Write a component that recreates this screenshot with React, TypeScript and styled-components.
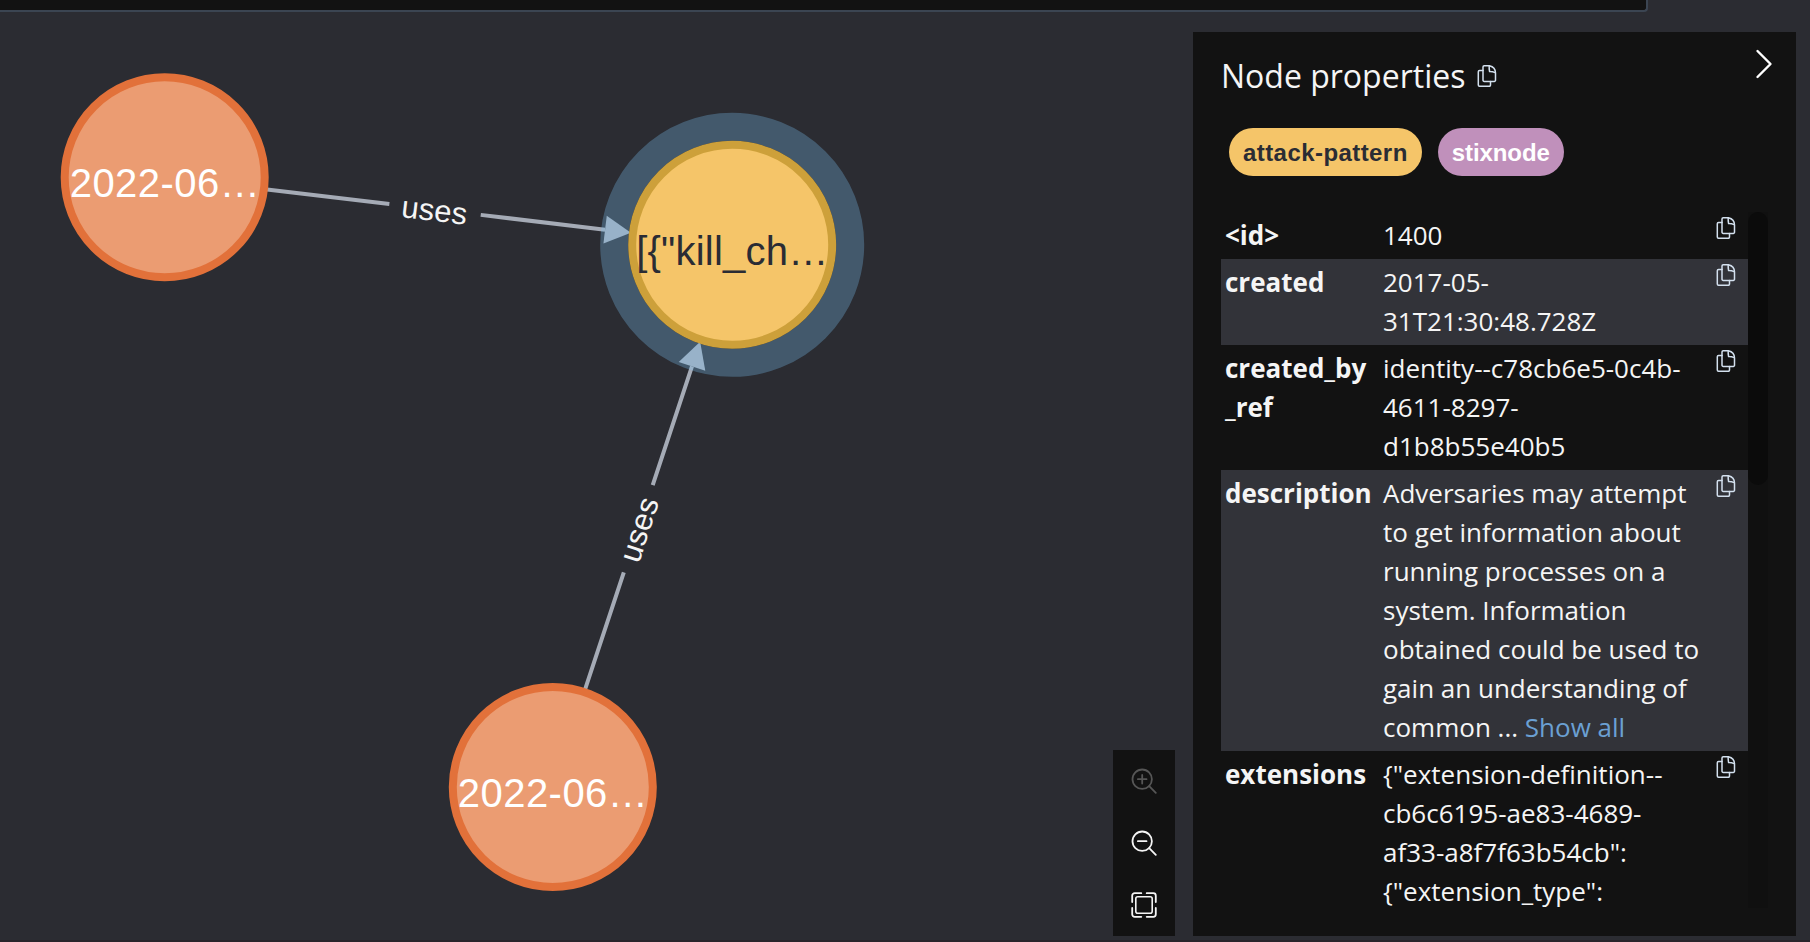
import React from "react";
import styled, { createGlobalStyle, css } from "styled-components";

const GlobalStyle = createGlobalStyle`
  *, *::before, *::after { box-sizing: border-box; }
  html, body { margin: 0; height: 100%; background: #2a2b31; }
  #root { height: 100%; }
`;

const uiFont = `"Open Sans", "Noto Sans", sans-serif`;
const graphFont = `"Liberation Sans", Arial, sans-serif`;

const Frame = styled.main`
  display: flex;
  flex-direction: column;
  height: 942px;
  width: 1810px;
  overflow: hidden;
  background: #2b2c32;
  border-bottom: 2px solid #29242b;
  color: #f5f5f5;
  font-family: ${uiFont};
`;

const EditorEdge = styled.div`
  flex: none;
  width: 1648px;
  height: 12px;
  background: #121212;
  border: solid #3b4552;
  border-width: 0 2px 2px 0;
  border-bottom-right-radius: 4px;
`;

const Workspace = styled.div`
  flex: 1;
  min-height: 0;
  display: flex;
  align-items: stretch;
`;

const GraphArea = styled.section`
  width: 1113px;
  flex: none;
`;

const GraphCanvas = styled.svg`
  display: block;
  font-family: ${graphFont};
`;

const ZoomBar = styled.nav`
  align-self: flex-end;
  display: flex;
  flex-direction: column;
  width: 62px;
  height: 186px;
  margin-bottom: 4px;
  background: #121212;
`;

const ZoomButton = styled.button<{ $dim?: boolean }>`
  flex: 1;
  display: flex;
  align-items: center;
  justify-content: center;
  padding: 0;
  border: 0;
  background: none;
  color: ${(p) => (p.$dim ? "#565656" : "#f5f5f5")};
`;

const Panel = styled.aside`
  display: flex;
  flex-direction: column;
  width: 603px;
  margin: 20px 0 4px 18px;
  padding: 0 28px 28px;
  background: #121212;
`;

const PanelHeader = styled.header`
  display: flex;
  align-items: center;
  height: 90px;
`;

const Title = styled.h1`
  margin: -2px 0 0;
  font-size: 32px;
  font-weight: 400;
  line-height: 40px;
`;

const CopyButton = styled.button`
  display: flex;
  padding: 0;
  border: 0;
  background: none;
  color: #d3e0ee;
`;

const HeaderCopy = styled(CopyButton)`
  margin: -2px 0 0 12px;
`;

const Collapse = styled.button`
  align-self: flex-start;
  margin: 17px -5px 0 auto;
  padding: 0;
  border: 0;
  background: none;
  color: #fff;
  display: flex;
`;

const Tags = styled.div`
  display: flex;
  gap: 16px;
  padding: 6px 8px 0;
`;

const Tag = styled.span<{ $bg: string; $fg: string; $tracking?: string }>`
  height: 48px;
  padding: 0 14px;
  border-radius: 24px;
  background: ${(p) => p.$bg};
  color: ${(p) => p.$fg};
  font: 700 24px/49px ${graphFont};
  letter-spacing: ${(p) => p.$tracking ?? "normal"};
`;

const Scroller = styled.div`
  flex: 1;
  min-height: 0;
  display: flex;
  margin-top: 36px;
  overflow: hidden;
`;

const Table = styled.dl`
  width: 527px;
  margin: 0;
`;

const rowText = css`
  margin: 0;
  font-size: 26px;
  line-height: 39px;
`;

const Row = styled.div<{ $shade?: boolean }>`
  display: grid;
  grid-template-columns: 158px 321px 1fr;
  padding: 4px 0 4px 4px;
  background: ${(p) => (p.$shade ? "#323339" : "transparent")};
`;

const Key = styled.dt`
  ${rowText}
  font-weight: 700;
  white-space: nowrap;
`;

const Value = styled.dd`
  ${rowText}
  white-space: nowrap;
`;

const RowCopy = styled(CopyButton)`
  align-self: start;
  margin: 0 0 0 12px;
`;

const ShowAll = styled.a`
  color: #6ba0d3;
`;

const Track = styled.div`
  width: 20px;
  background: #101010;
`;

const Thumb = styled.div`
  height: 273px;
  border-radius: 10px;
  background: #0b0b0b;
`;

const CopyIcon = () => (
  <svg width="20" height="24" viewBox="0 0 20 24" fill="none" stroke="currentColor" strokeWidth="1.5" strokeLinejoin="round" strokeLinecap="round">
    <path d="M6 6.500H2.500A1.200 1.200 0 0 0 1.300 7.700V21A1.200 1.200 0 0 0 2.500 22.200H12.300A1.200 1.200 0 0 0 13.500 21V17.500" />
    <path d="M7.200 1.800H12.400Q18.500 3.300 18.500 9V16.200A1.200 1.200 0 0 1 17.300 17.400H7.200A1.200 1.200 0 0 1 6 16.200V3A1.200 1.200 0 0 1 7.200 1.800Z" />
    <path d="M12.200 2Q12 4.200 12.600 7.500Q15.500 7.400 18.200 8.600" />
  </svg>
);

const Magnifier = ({ plus }: { plus?: boolean }) => (
  <svg width="26" height="26" viewBox="0 0 26 26" fill="none" stroke="currentColor" strokeWidth="1.8" strokeLinecap="round">
    <circle cx="11.200" cy="11.200" r="9.700" />
    <path d="M18.200 18.200L24.800 24.800M6.900 11.200H15.500" />
    {plus && <path d="M11.200 6.900V15.500" />}
  </svg>
);

const FitIcon = () => (
  <svg width="26" height="26" viewBox="0 0 26 26" fill="none" stroke="currentColor" strokeWidth="1.800" strokeLinecap="round">
    <path d="M1.200 10V3.700A2.500 2.500 0 0 1 3.700 1.200H10.300M15.700 1.200H22.300A2.500 2.500 0 0 1 24.800 3.700V10M24.800 16V22.300A2.500 2.500 0 0 1 22.300 24.800H15.700M10.300 24.800H3.700A2.500 2.500 0 0 1 1.200 22.300V16" />
    <rect x="4.800" y="4.800" width="16.400" height="16.400" rx="2" strokeWidth="1.600" />
  </svg>
);

type NodeSpec = {
  x: number;
  y: number;
  fill: string;
  ring: string;
  ink: string;
  label: string;
  length: number;
};

const nodes: NodeSpec[] = [
  { x: 164.700, y: 177.300, fill: "#eb9c72", ring: "#e2713a", ink: "#fff", label: "2022-06…", length: 190 },
  { x: 732.200, y: 244.800, fill: "#f5c569", ring: "#cda03a", ink: "#2a2c34", label: '[{"kill_ch…', length: 192 },
  { x: 552.800, y: 787, fill: "#eb9c72", ring: "#e2713a", ink: "#fff", label: "2022-06…", length: 190 },
];

type EdgeSpec = { from: NodeSpec; to: NodeSpec };

const edges: EdgeSpec[] = [
  { from: nodes[0], to: nodes[1] },
  { from: nodes[2], to: nodes[1] },
];

const RADIUS = 104;
const HEAD = 26;
const GAP = 92;

const GraphEdge = ({ from, to }: EdgeSpec) => {
  const dx = to.x - from.x;
  const dy = to.y - from.y;
  const len = Math.hypot(dx, dy);
  const angle = (Math.atan2(dy, dx) * 180) / Math.PI;
  const tip = len - RADIUS + 2;
  const stop = tip - HEAD;
  const mid = (RADIUS + stop) / 2 - 1.5;
  return (
    <g transform={`translate(${from.x} ${from.y}) rotate(${angle})`}>
      <path d={`M${RADIUS - 1} 0H${mid - GAP / 2}M${mid + GAP / 2} 0H${stop}`} stroke="#a5abb6" strokeWidth="4" />
      <path d={`M${tip} 0L${stop} -14V14Z`} fill="#a5abb6" />
      <text x={mid - 0.5} y="11.500" textAnchor="middle" fontSize="31" textLength="66" fill="#f5f5f5">
        uses
      </text>
    </g>
  );
};

const Graph = () => (
  <GraphCanvas width="1113" height="927" viewBox="0 12 1113 927">
    {edges.map((e, i) => (
      <GraphEdge key={i} {...e} />
    ))}
    <circle cx={nodes[1].x} cy={nodes[1].y} r="118" fill="none" stroke="#7cc3f4" strokeOpacity="0.300" strokeWidth="28" />
    {nodes.map((n, i) => (
      <g key={i}>
        <circle cx={n.x} cy={n.y} r="100" fill={n.fill} stroke={n.ring} strokeWidth="8" />
        <text x={n.x} y={n.y + 20} textAnchor="middle" fontSize="40" textLength={n.length} fill={n.ink}>
          {n.label}
        </text>
      </g>
    ))}
  </GraphCanvas>
);

type Property = { name: string[]; value: string[]; more?: boolean };

const properties: Property[] = [
  { name: ["<id>"], value: ["1400"] },
  { name: ["created"], value: ["2017-05-", "31T21:30:48.728Z"] },
  { name: ["created_by", "_ref"], value: ["identity--c78cb6e5-0c4b-", "4611-8297-", "d1b8b55e40b5"] },
  {
    name: ["description"],
    value: [
      "Adversaries may attempt",
      "to get information about",
      "running processes on a",
      "system. Information",
      "obtained could be used to",
      "gain an understanding of",
      "common ... ",
    ],
    more: true,
  },
  {
    name: ["extensions"],
    value: ['{"extension-definition--', "cb6c6195-ae83-4689-", 'af33-a8f7f63b54cb":', '{"extension_type":'],
  },
];

const Lines = ({ lines }: { lines: string[] }) => (
  <>
    {lines.map((line, i) => (
      <React.Fragment key={i}>
        {i > 0 && <br />}
        {line}
      </React.Fragment>
    ))}
  </>
);

export default function App() {
  return (
    <>
      <GlobalStyle />
      <Frame>
        <EditorEdge />
        <Workspace>
          <GraphArea>
            <Graph />
          </GraphArea>
          <ZoomBar>
            <ZoomButton $dim aria-label="Zoom in"><Magnifier plus /></ZoomButton>
            <ZoomButton aria-label="Zoom out"><Magnifier /></ZoomButton>
            <ZoomButton aria-label="Zoom to fit"><FitIcon /></ZoomButton>
          </ZoomBar>
          <Panel>
            <PanelHeader>
              <Title>Node properties</Title>
              <HeaderCopy aria-label="Copy all"><CopyIcon /></HeaderCopy>
              <Collapse aria-label="Collapse">
                <svg width="18" height="30" viewBox="0 0 18 30" fill="none" stroke="currentColor" strokeWidth="2.400" strokeLinecap="round" strokeLinejoin="round">
                  <path d="M2.500 2L15.500 15L2.500 28" />
                </svg>
              </Collapse>
            </PanelHeader>
            <Tags>
              <Tag $bg="#f5c569" $fg="#2a2c34" $tracking="0.43px">attack-pattern</Tag>
              <Tag $bg="#c090bb" $fg="#fff" $tracking="-0.08px">stixnode</Tag>
            </Tags>
            <Scroller>
              <Table>
                {properties.map((p, i) => (
                  <Row key={p.name[0]} $shade={i % 2 === 1}>
                    <Key><Lines lines={p.name} /></Key>
                    <Value>
                      <Lines lines={p.value} />
                      {p.more && <ShowAll>Show all</ShowAll>}
                    </Value>
                    <RowCopy aria-label="Copy"><CopyIcon /></RowCopy>
                  </Row>
                ))}
              </Table>
              <Track><Thumb /></Track>
            </Scroller>
          </Panel>
        </Workspace>
      </Frame>
    </>
  );
}
